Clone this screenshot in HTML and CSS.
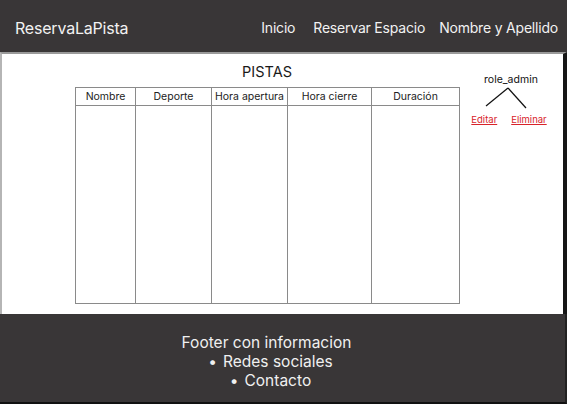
FILE: index.html
```html
<!DOCTYPE html>
<html lang="es">
<head>
<meta charset="utf-8">
<title>ReservaLaPista</title>
<link rel="stylesheet" href="styles.css">
</head>
<body>
<div class="page">
  <header class="topbar">
    <div class="brand">ReservaLaPista</div>
    <nav class="nav">
      <a class="nav-link nav-home">Inicio</a>
      <a class="nav-link">Reservar Espacio</a>
      <a class="nav-link">Nombre y Apellido</a>
    </nav>
  </header>
  <main class="content">
    <section class="pistas">
      <h1 class="title">PISTAS</h1>
      <table class="grid">
        <thead>
          <tr>
            <th class="c1">Nombre</th>
            <th class="c2">Deporte</th>
            <th class="c3">Hora apertura</th>
            <th class="c4">Hora cierre</th>
            <th class="c5">Duración</th>
          </tr>
        </thead>
        <tbody>
          <tr>
            <td></td><td></td><td></td><td></td><td></td>
          </tr>
        </tbody>
      </table>
    </section>
    <aside class="admin">
      <div class="role">role_admin</div>
      <svg class="tree" width="86" height="24" viewBox="0 0 86 24">
        <line x1="41" y1="1" x2="19" y2="19" stroke="#111" stroke-width="1.2"/>
        <line x1="41" y1="1" x2="59" y2="21" stroke="#111" stroke-width="1.2"/>
      </svg>
      <div class="actions">
        <a class="action">Editar</a>
        <a class="action">Eliminar</a>
      </div>
    </aside>
  </main>
  <footer class="footer">
    <div class="footer-title">Footer con informacion</div>
    <ul class="footer-list">
      <li>Redes sociales</li>
      <li>Contacto</li>
    </ul>
  </footer>
</div>
</body>
</html>
```
FILE: styles.css
```css
html, body {
  margin: 0;
  padding: 0;
  background: #111;
}
body {
  font-family: Inter, "Noto Sans", sans-serif;
}
.page {
  width: 567px;
  height: 404px;
  display: flex;
  flex-direction: column;
  box-sizing: border-box;
  background: #393637;
}
.topbar {
  height: 52px;
  flex: none;
  background: #393637;
  display: flex;
  align-items: center;
  justify-content: space-between;
  padding: 3px 9px 0 15px;
  box-sizing: border-box;
  color: #f2f2f2;
}
.brand {
  font-size: 16px;
  letter-spacing: -0.2px;
}
.nav {
  display: flex;
  gap: 14px;
}
.nav-home {
  margin-right: 4px;
}
.nav-link {
  font-size: 14px;
  color: #f2f2f2;
  letter-spacing: -0.2px;
}
.content {
  height: 262px;
  flex: none;
  box-sizing: border-box;
  background: #fff;
  border-top: 2px solid #9a9a9a;
  border-left: 2px solid #b5b5b5;
  border-right: 4px solid #161616;
  display: flex;
  padding: 9px 0 0 73px;
}
.pistas {
  width: 384px;
  display: flex;
  flex-direction: column;
  align-items: flex-start;
}
.title {
  align-self: center;
  margin: 0 0 6px;
  font-size: 14.5px;
  font-weight: 400;
  line-height: 18px;
  color: #1a1a1a;
}
.grid {
  border-collapse: collapse;
  width: 379px;
  table-layout: fixed;
}
.grid th, .grid td {
  border: 1px solid #8a8a8a;
  padding: 0;
}
.grid th {
  height: 17px;
  font-size: 10.5px;
  font-weight: 400;
  color: #222;
  text-align: center;
}
.grid td {
  height: 197px;
}
.c1 { width: 59px; }
.c2 { width: 75px; }
.c3 { width: 75px; }
.c4 { width: 83px; }
.c5 { width: 87px; }
.admin {
  width: 86px;
  margin-left: 8px;
  display: flex;
  flex-direction: column;
  align-items: center;
  padding-top: 10px;
}
.role {
  font-size: 10.5px;
  line-height: 14px;
  color: #111;
  padding-left: 2px;
}
.tree {
  display: block;
  margin-top: 0;
}
.actions {
  display: flex;
  gap: 14px;
  margin-top: 3px;
  padding-right: 2px;
}
.action {
  font-size: 9.5px;
  color: #d8232a;
  text-decoration: underline;
}
.footer {
  flex: 1;
  background: #393637;
  color: #f0f0f0;
  text-align: center;
  padding: 19px 32px 0 0;
  box-sizing: border-box;
  border-bottom: 2px solid #111;
  border-right: 2px solid #222;
}
.footer-title {
  font-size: 15.5px;
  line-height: 19px;
}
.footer-list {
  margin: 0;
  padding: 0;
  list-style: none;
  font-size: 15.5px;
  line-height: 19px;
}
.footer-list li {
  padding-left: 8px;
}
.footer-list li::before {
  content: "\2022";
  margin-right: 6px;
}
```
